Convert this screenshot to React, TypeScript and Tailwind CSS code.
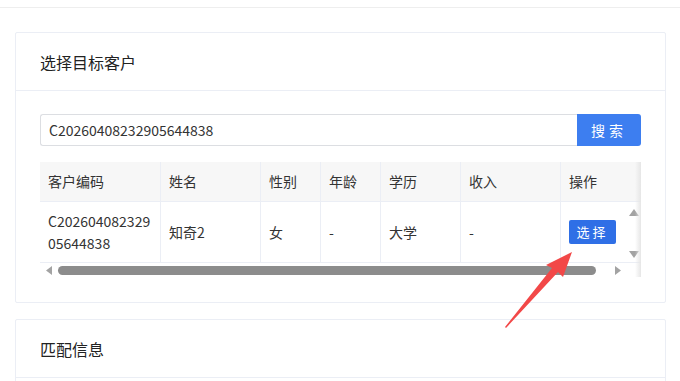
export default function App() {
  const cols = [
    { label: "客户编码", w: "w-[121px]" },
    { label: "姓名", w: "w-[100px]" },
    { label: "性别", w: "w-[60px]" },
    { label: "年龄", w: "w-[60px]" },
    { label: "学历", w: "w-[80px]" },
    { label: "收入", w: "w-[100px]" },
    { label: "操作", w: "w-[80px]" },
  ];

  return (
    <div
      className="relative h-[381px] w-[680px] overflow-hidden bg-white text-[14px] text-[#333]"
      style={{ fontFamily: '"Noto Sans CJK SC", "Noto Sans", sans-serif' }}
    >
      {/* top bar edge */}
      <div className="h-[8px] border-b border-[#eeeeee]" />

      <div className="flex flex-col gap-[16px] pl-[15px] pr-[14px] pt-[24px]">
        {/* 选择目标客户 */}
        <section className="rounded-[2px] border border-[#ebeef5] bg-white">
          <div className="flex h-[58px] items-center border-b border-[#ebeef5] px-[24px] text-[16px] text-[#222]">
            选择目标客户
          </div>
          <div className="px-[24px] pb-[25px] pt-[23px]">
            {/* search */}
            <div className="flex h-[32px]">
              <div className="flex flex-1 items-center rounded-l-[3px] border border-r-0 border-[#dcdee2] pl-[8px] text-[14px] text-[#333]">
                C20260408232905644838
              </div>
              <button className="w-[64px] rounded-r-[3px] bg-[#3d7ef0] text-[14px] tracking-[4px] text-white">
                搜索
              </button>
            </div>

            {/* table */}
            <div className="relative mt-[16px] w-[601px]">
              <div className="flex h-[39px] bg-[#f7f7f7]">
                {cols.map((c) => (
                  <div
                    key={c.label}
                    className={`${c.w} flex items-center border-r border-[#ebeef5] pl-[8px] last:border-r-0`}
                  >
                    {c.label}
                  </div>
                ))}
              </div>
              <div className="flex h-[61px] border-t border-[#ebeef5]">
                <div className="flex w-[121px] items-center border-r border-[#ebeef5] pl-[8px] leading-[22px]">
                  C202604082329
                  <br />
                  05644838
                </div>
                <div className="flex w-[100px] items-center border-r border-[#ebeef5] pl-[8px]">知奇2</div>
                <div className="flex w-[60px] items-center border-r border-[#ebeef5] pl-[8px]">女</div>
                <div className="flex w-[60px] items-center border-r border-[#ebeef5] pl-[8px]">-</div>
                <div className="flex w-[80px] items-center border-r border-[#ebeef5] pl-[8px]">大学</div>
                <div className="flex w-[100px] items-center border-r border-[#ebeef5] pl-[8px]">-</div>
                <div className="flex w-[65px] items-center pl-[8px]">
                  <button className="h-[24px] w-[47px] rounded-[2px] bg-[#2f6fe6] text-[13px] tracking-[3px] text-white">
                    选择
                  </button>
                </div>
                {/* vertical scrollbar */}
                <div className="flex w-[15px] flex-col items-center justify-between pb-[4px] pt-[7px]">
                  <svg width="10" height="7" viewBox="0 0 10 7">
                    <path d="M5 0 L10 7 L0 7 Z" fill="#a3a3a3" />
                  </svg>
                  <svg width="10" height="7" viewBox="0 0 10 7">
                    <path d="M0 0 L10 0 L5 7 Z" fill="#a3a3a3" />
                  </svg>
                </div>
              </div>
              {/* horizontal scrollbar */}
              <div className="flex h-[15px] items-center border-t border-[#ebeef5] pr-[15px]">
                <div className="flex w-[18px] justify-center">
                  <svg width="6" height="9" viewBox="0 0 6 9">
                    <path d="M6 0 L6 9 L0 4.5 Z" fill="#a3a3a3" />
                  </svg>
                </div>
                <div className="h-[9px] flex-1 rounded-full bg-[#8c8c8c]" />
                <div className="flex w-[30px] justify-end pr-[5px]">
                  <svg width="6" height="9" viewBox="0 0 6 9">
                    <path d="M0 0 L6 4.5 L0 9 Z" fill="#a3a3a3" />
                  </svg>
                </div>
              </div>
              {/* right fixed shadow */}
              <div className="pointer-events-none absolute right-0 top-0 h-full w-[6px] bg-gradient-to-r from-transparent to-[#e6e6e6]" />
            </div>
          </div>
        </section>

        {/* 匹配信息 */}
        <section className="rounded-[2px] border border-[#ebeef5] bg-white">
          <div className="flex h-[58px] items-center border-b border-[#ebeef5] px-[24px] text-[16px] text-[#222]">
            匹配信息
          </div>
          <div className="h-[40px]" />
        </section>
      </div>

      {/* annotation arrow */}
      <svg
        className="pointer-events-none absolute left-0 top-0"
        width="680"
        height="381"
        viewBox="0 0 680 381"
      >
        <path
          d="M572 252 L546 265 L552 268 L505 327 L506 328 L558 272 L563 277 Z"
          fill="#f24848"
        />
      </svg>
    </div>
  );
}
